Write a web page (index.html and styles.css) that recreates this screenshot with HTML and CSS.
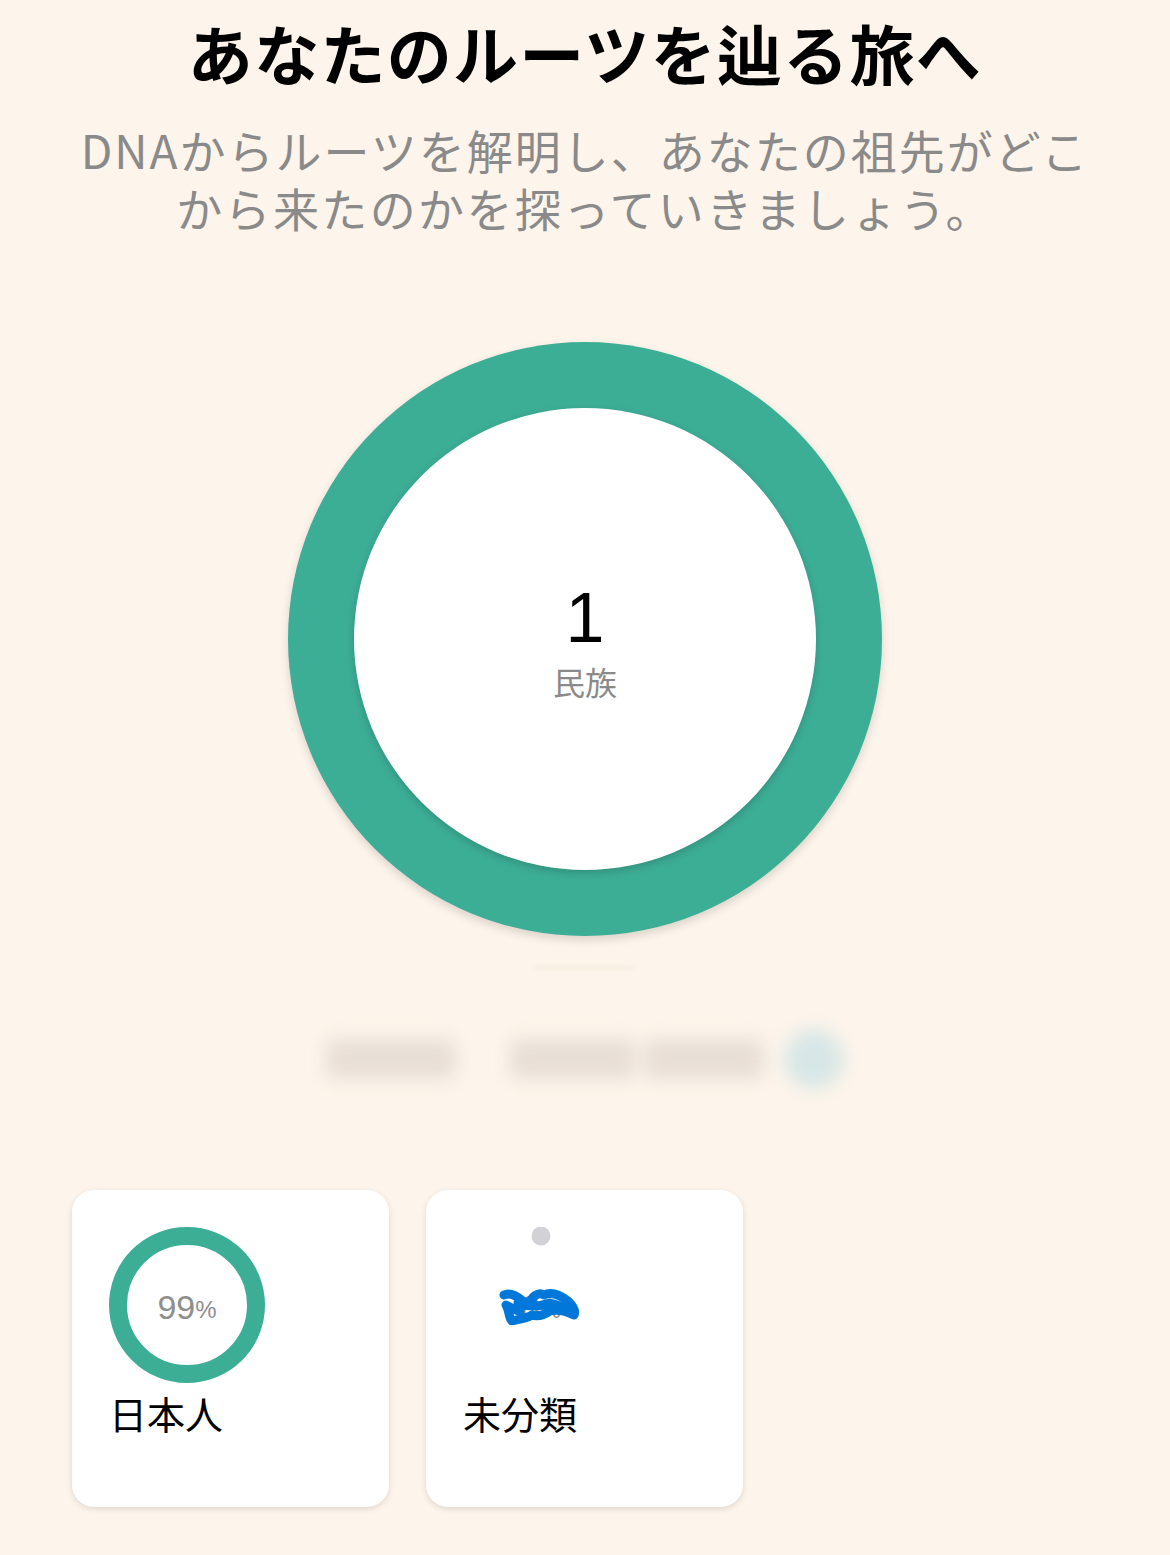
FILE: index.html
```html
<!DOCTYPE html>
<html lang="ja">
<head>
<meta charset="utf-8">
<link rel="stylesheet" href="styles.css">
</head>
<body>
<main class="page">
  <header class="intro">
    <h1 class="title">あなたのルーツを辿る旅へ</h1>
    <p class="lead"><span class="lead-line">DNAからルーツを解明し、あなたの祖先がどこ</span><span class="lead-line">から来たのかを探っていきましょう。</span></p>
  </header>

  <section class="summary">
    <div class="donut">
      <div class="donut-hole">
        <div class="count">1</div>
        <div class="count-label">民族</div>
      </div>
    </div>
    <div class="faint-line"></div>
    <div class="blur-row">
      <span class="blur-block b1"></span>
      <span class="blur-block b2"></span>
      <span class="blur-block b3"></span>
      <span class="blur-dot"></span>
    </div>
  </section>

  <section class="cards">
    <div class="card">
      <div class="ring">
        <svg viewBox="0 0 156 156" width="156" height="156">
          <circle cx="78" cy="78" r="69" fill="none" stroke="#3dae96" stroke-width="18"/>
        </svg>
        <div class="pct">99<small>%</small></div>
      </div>
      <div class="card-label">日本人</div>
    </div>
    <div class="card">
      <div class="ring">
        <svg viewBox="0 0 156 156" width="156" height="156">
          <circle cx="78" cy="9" r="9.5" fill="#d1d1d6"/>
        </svg>
        <div class="pct">0<small>%</small></div>
        <svg class="scribble" viewBox="0 0 84 40" width="84" height="40">
          <path d="M6 10 C14 6 22 14 30 20 C34 12 40 6 46 10 C54 6 62 10 70 16 C74 20 78 26 76 30 C68 26 60 24 52 26 C46 30 40 32 34 30 C28 34 20 34 14 36 C10 32 12 26 8 20 C12 22 18 26 22 26 M20 18 C30 22 40 22 52 18 C60 20 66 22 72 26" fill="none" stroke="#0077d9" stroke-width="9" stroke-linecap="round" stroke-linejoin="round"/>
        </svg>
      </div>
      <div class="card-label">未分類</div>
    </div>
  </section>
</main>
</body>
</html>
```

FILE: styles.css
```css
html, body {
  margin: 0;
  padding: 0;
  background: #fdf5eb;
}

body {
  font-family: "Noto Sans CJK JP", "Noto Sans", "Liberation Sans", sans-serif;
  color: #000;
  width: 1170px;
  min-height: 1555px;
}

.page {
  display: flex;
  flex-direction: column;
}

.intro {
  text-align: center;
  padding-top: 13px;
}

.title {
  margin: 0;
  font-size: 65px;
  line-height: 78px;
  font-weight: 700;
  letter-spacing: 1.3px;
}

.lead {
  margin: 29px 0 0;
  font-size: 46px;
  color: #8a8a8a;
  letter-spacing: 2px;
}

.lead-line {
  display: block;
  height: 58px;
  line-height: 58px;
  overflow: visible;
}

.lead-line + .lead-line {
  letter-spacing: 2.4px;
}

.summary {
  display: flex;
  flex-direction: column;
  align-items: center;
  margin-top: 106px;
}

.donut {
  width: 594px;
  height: 594px;
  border-radius: 50%;
  background: #3dae96;
  box-shadow: 0 4px 10px rgba(0, 0, 0, 0.14);
  display: flex;
  align-items: center;
  justify-content: center;
}

.donut-hole {
  width: 462px;
  height: 462px;
  border-radius: 50%;
  background: #fff;
  box-shadow: 0 3px 8px rgba(0, 0, 0, 0.18);
  display: flex;
  flex-direction: column;
  align-items: center;
  justify-content: center;
}

.count {
  font-family: "Liberation Sans", "Noto Sans", sans-serif;
  font-size: 70px;
  line-height: 70px;
  margin-top: 6px;
}

.count-label {
  font-size: 32px;
  line-height: 40px;
  color: #8a8a8a;
  margin-top: 8px;
}

.faint-line {
  width: 100px;
  height: 3px;
  margin-top: 30px;
  background: #ece3d8;
  filter: blur(2px);
  opacity: 0.6;
}

.blur-row {
  display: flex;
  align-items: center;
  margin-top: 60px;
  height: 60px;
  filter: blur(9px);
}

.blur-block {
  display: block;
  height: 40px;
  background: #e8ded6;
  border-radius: 8px;
}

.b1 { width: 130px; }
.b2 { width: 126px; margin-left: 54px; }
.b3 { width: 120px; margin-left: 8px; }

.blur-dot {
  display: block;
  width: 60px;
  height: 60px;
  border-radius: 50%;
  background: #d7e6e6;
  margin-left: 20px;
}

.cards {
  display: flex;
  gap: 37px;
  padding-left: 72px;
  margin-top: 101px;
}

.card {
  width: 317px;
  height: 317px;
  box-sizing: border-box;
  background: #fff;
  border-radius: 22px;
  box-shadow: 0 2px 6px rgba(0, 0, 0, 0.12);
  padding: 37px;
}

.ring {
  position: relative;
  width: 156px;
  height: 156px;
}

.ring svg {
  display: block;
}

.pct {
  position: absolute;
  inset: 0;
  display: flex;
  align-items: center;
  justify-content: center;
  font-family: "Liberation Sans", "Noto Sans", sans-serif;
  font-size: 34px;
  color: #8e8e8e;
  padding-top: 4px;
}

.pct small {
  font-size: 24px;
  margin-top: 6px;
}

.ring .scribble {
  position: absolute;
  left: 35px;
  top: 58px;
}

.card-label {
  font-size: 38px;
  line-height: 46px;
  margin-top: 7px;
}
```
